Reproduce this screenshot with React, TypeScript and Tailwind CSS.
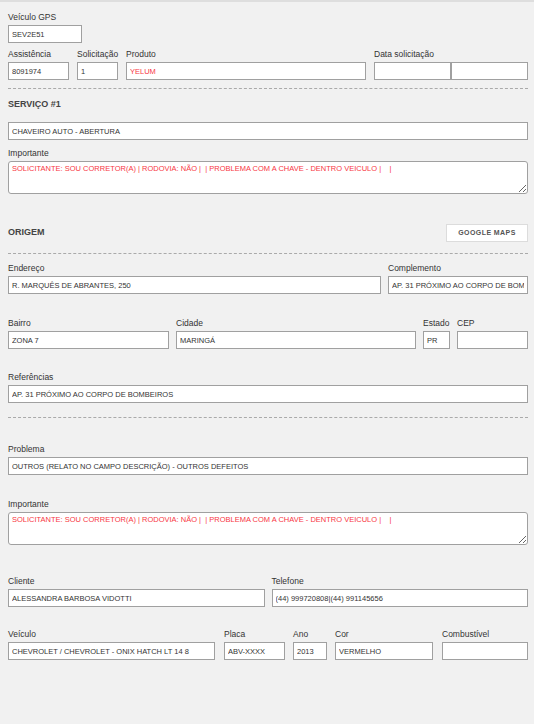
import React from "react";

const font = { fontFamily: '"Liberation Sans", Arial, sans-serif' };

function Label({ children }: { children?: React.ReactNode }) {
  return <div className="mb-[2px] h-[11px] whitespace-nowrap text-[8.5px] leading-[11px] text-[#333]">{children}</div>;
}

function Box({ value = "", red = false }: { value?: string; red?: boolean }) {
  return (
    <input
      readOnly
      value={value}
      className={`block h-[18px] w-full border border-[#a0a0a0] bg-white px-[3px] text-[7.5px] uppercase outline-none ${
        red ? "text-[#f8363f]" : "text-[#333]"
      }`}
    />
  );
}

function Area({ value }: { value: string }) {
  return (
    <textarea
      readOnly
      value={value}
      className="block h-[33px] w-full rounded-[3px] border border-[#a0a0a0] bg-white px-[3px] pt-[2px] text-[7.5px] leading-[10px] text-[#f8363f] outline-none"
    />
  );
}

function Field({ label, value, red, className = "" }: { label?: string; value?: string; red?: boolean; className?: string }) {
  return (
    <div className={className}>
      <Label>{label}</Label>
      <Box value={value} red={red} />
    </div>
  );
}

const Dash = ({ className = "" }: { className?: string }) => <div className={`border-t border-dashed border-[#aaa] ${className}`} />;

const importante = "SOLICITANTE: SOU CORRETOR(A) | RODOVIA: NÃO |  | PROBLEMA COM A CHAVE - DENTRO VEICULO |    |";

export default function App() {
  return (
    <div style={font} className="min-h-[724px] w-[534px] border-t-2 border-[#dedede] bg-[#f1f1f1] pl-2 pr-[6px] pt-[10px] pb-10">
      <Field label="Veículo GPS" value="SEV2E51" className="w-[74px]" />

      <div className="mt-[6px] flex gap-2">
        <Field label="Assistência" value="8091974" className="w-[61px]" />
        <Field label="Solicitação" value="1" className="w-[41px]" />
        <Field label="Produto" value="YELUM" red className="w-[240px]" />
        <div className="flex-1">
          <Label>Data solicitação</Label>
          <div className="flex">
            <Box />
            <Box />
          </div>
        </div>
      </div>

      <Dash className="mt-2" />

      <div className="mt-[10px] h-[11px] text-[9px] font-bold leading-[11px] text-[#444]">SERVIÇO #1</div>
      <div className="mt-3">
        <Box value="CHAVEIRO AUTO - ABERTURA" />
      </div>
      <div className="mt-2">
        <Label>Importante</Label>
        <Area value={importante} />
      </div>

      <div className="mt-[30px] flex h-[18px] items-center justify-between">
        <span className="text-[9px] font-bold text-[#444]">ORIGEM</span>
        <button className="h-[18px] w-[82px] border border-[#dcdcdc] bg-white text-[7px] font-bold tracking-[0.06em] text-[#555]">
          GOOGLE MAPS
        </button>
      </div>

      <Dash className="mt-[11px]" />

      <div className="mt-[9px] flex gap-[7px]">
        <Field label="Endereço" value="R. MARQUÊS DE ABRANTES, 250" className="flex-1" />
        <Field label="Complemento" value="AP. 31 PRÓXIMO AO CORPO DE BOMBEIROS" className="w-[140px]" />
      </div>

      <div className="mt-6 flex gap-[7px]">
        <Field label="Bairro" value="ZONA 7" className="w-[161px]" />
        <Field label="Cidade" value="MARINGÁ" className="w-[240px]" />
        <Field label="Estado" value="PR" className="w-[27px]" />
        <Field label="CEP" className="flex-1" />
      </div>

      <Field label="Referências" value="AP. 31 PRÓXIMO AO CORPO DE BOMBEIROS" className="mt-[23px]" />

      <Dash className="mt-[14px]" />

      <Field label="Problema" value="OUTROS (RELATO NO CAMPO DESCRIÇÃO) - OUTROS DEFEITOS" className="mt-[26px]" />

      <div className="mt-6">
        <Label>Importante</Label>
        <Area value={importante} />
      </div>

      <div className="mt-[31px] grid grid-cols-2 gap-[7px]">
        <Field label="Cliente" value="ALESSANDRA BARBOSA VIDOTTI" />
        <Field label="Telefone" value="(44) 999720808|(44) 991145656" />
      </div>

      <div className="mt-[22px] flex">
        <Field label="Veículo" value="CHEVROLET / CHEVROLET - ONIX HATCH LT 14 8" className="w-[207px]" />
        <Field label="Placa" value="ABV-XXXX" className="ml-[9px] w-[61px]" />
        <Field label="Ano" value="2013" className="ml-2 w-[34px]" />
        <Field label="Cor" value="VERMELHO" className="ml-2 w-[98px]" />
        <Field label="Combustível" className="ml-[9px] flex-1" />
      </div>
    </div>
  );
}
